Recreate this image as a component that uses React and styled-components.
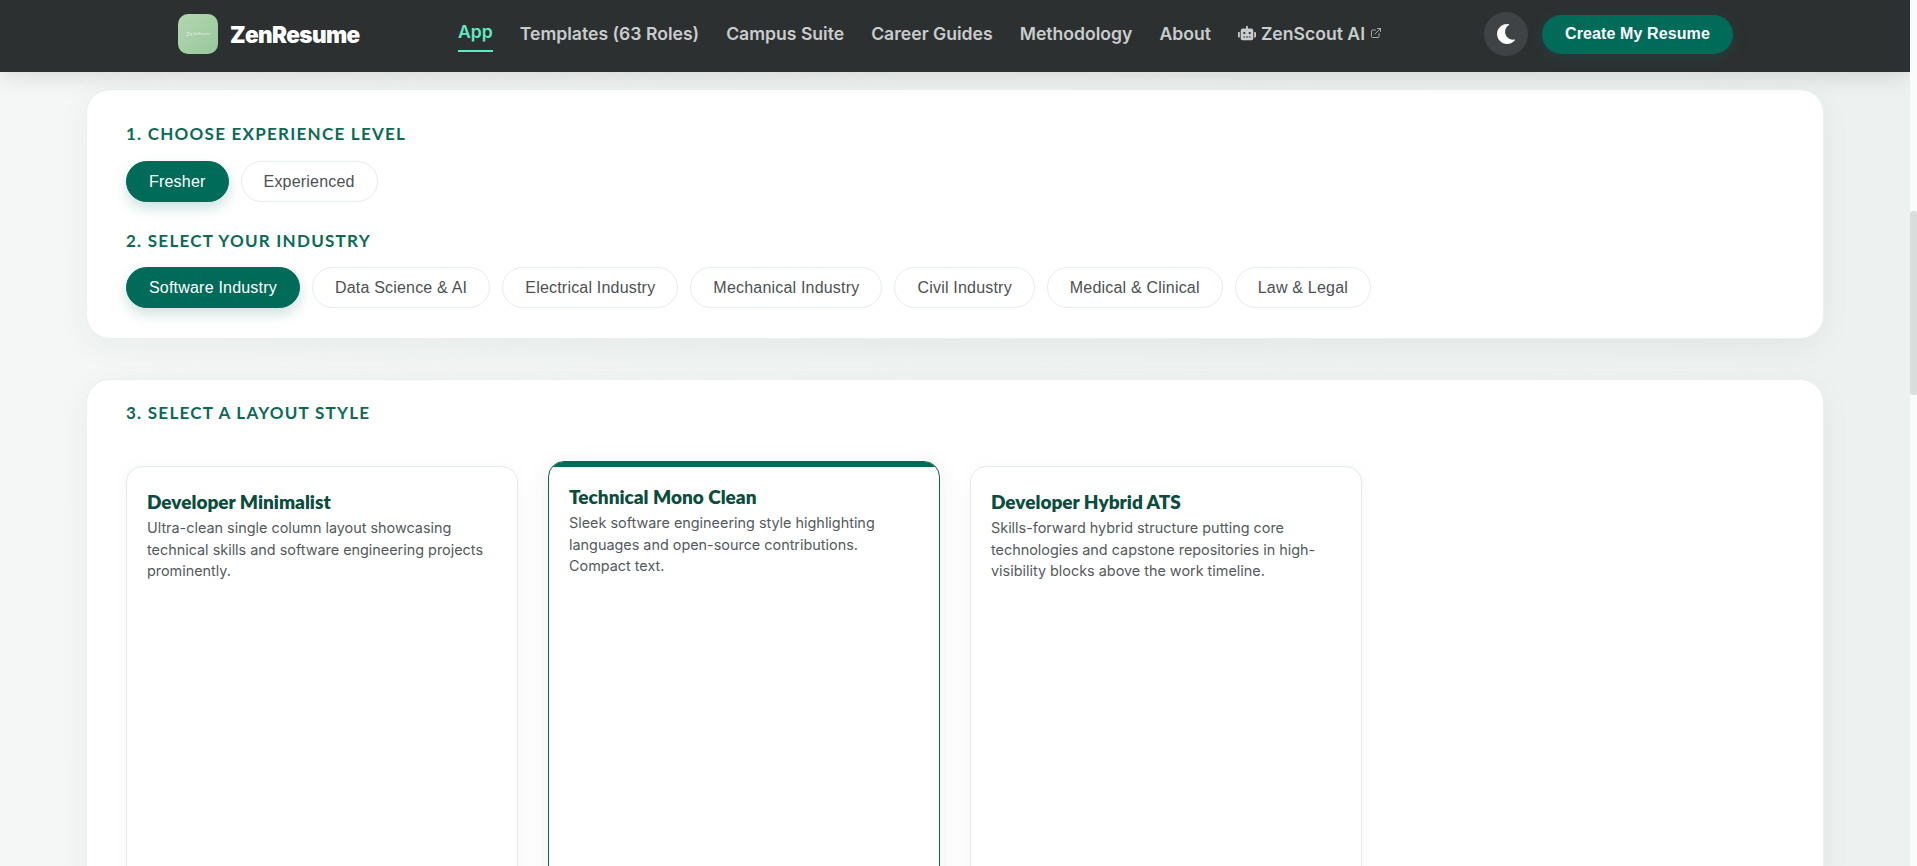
import React from 'react';
import styled, { createGlobalStyle } from 'styled-components';
import { FaMoon, FaRobot } from 'react-icons/fa';
import { ExternalLink } from 'lucide-react';

const GlobalStyle = createGlobalStyle`
  html, body {
    margin: 0;
    height: 100%;
    overflow: hidden;
  }
  * {
    box-sizing: border-box;
  }
`;

const Page = styled.div`
  display: flex;
  height: 100vh;
  overflow: hidden;
  background: #fafbfb;
`;

const Main = styled.div`
  width: 1910px;
  height: 100%;
  overflow: hidden;
  background: linear-gradient(90deg, #f4f7f6 0%, #eff3f2 50%, #edf1f0 100%);
`;

const ScrollTrack = styled.div`
  width: 7px;
  padding-top: 211px;
`;

const ScrollThumb = styled.div`
  height: 184px;
  background: #d9dedc;
  border-radius: 3px;
`;

const NavBar = styled.header`
  position: relative;
  z-index: 10;
  display: flex;
  align-items: center;
  height: 72px;
  padding: 0 177px 4px 178px;
  background: #2d3031;
  box-shadow: 0 4px 24px rgba(0, 0, 0, 0.12);
`;

const Brand = styled.div`
  display: flex;
  align-items: center;
  gap: 12px;
  width: 280px;
`;

const LogoBox = styled.div`
  display: flex;
  align-items: center;
  justify-content: center;
  gap: 1px;
  width: 40px;
  height: 40px;
  border-radius: 10px;
  background: linear-gradient(135deg, #b4d6ae 0%, #97c79d 100%);
  color: rgba(255, 255, 255, 0.75);
  font-family: 'Inter', sans-serif;
  font-size: 3px;
  white-space: nowrap;
`;

const LogoMark = styled.span`
  font-size: 5px;
  font-style: italic;
`;

const BrandName = styled.span`
  font-family: 'Inter', sans-serif;
  font-size: 22.5px;
  font-weight: 900;
  letter-spacing: -0.6px;
  color: #ffffff;
`;

const NavLinks = styled.nav`
  display: flex;
  align-items: center;
  gap: 27px;
  padding-top: 5px;
`;

const NavLink = styled.a`
  display: flex;
  align-items: center;
  gap: 5px;
  padding: 3px 0 8px;
  margin-top: ${(p) => (p.$active ? '-4px' : '0')};
  border-bottom: 2px solid ${(p) => (p.$active ? '#5eeac0' : 'transparent')};
  font-family: 'Inter', sans-serif;
  font-size: 17.6px;
  font-weight: 600;
  color: ${(p) => (p.$active ? '#5eeac0' : '#c9cccd')};
  white-space: nowrap;
`;

const NavActions = styled.div`
  display: flex;
  align-items: center;
  gap: 14px;
  margin-left: auto;
`;

const ThemeButton = styled.button`
  display: flex;
  align-items: center;
  justify-content: center;
  width: 44px;
  height: 44px;
  padding: 0;
  border: none;
  border-radius: 50%;
  background: #404345;
  color: #ffffff;
  font-size: 20px;
`;

const CreateButton = styled.button`
  width: 191px;
  height: 39px;
  padding: 0;
  border: none;
  border-radius: 20px;
  background: #006b58;
  box-shadow: 0 4px 14px rgba(0, 107, 88, 0.25);
  font-family: 'Liberation Sans', Arial, sans-serif;
  font-size: 16px;
  font-weight: 700;
  letter-spacing: 0.1px;
  color: #ffffff;
`;

const Content = styled.main`
  display: flex;
  flex-direction: column;
  gap: 40px;
  padding: 17px 86px 0;
`;

const Panel = styled.section`
  width: 1738px;
  padding: ${(p) => p.$padding};
  border: 1px solid #e8f1ee;
  border-radius: 24px;
  background: #ffffff;
  box-shadow: 0 8px 32px rgba(0, 60, 50, 0.05);
`;

const SectionTitle = styled.h3`
  margin: 0;
  font-family: 'Lato', sans-serif;
  font-size: 17px;
  font-weight: 700;
  line-height: 22px;
  letter-spacing: 1.25px;
  color: #0a6b55;
`;

const PillRow = styled.div`
  display: flex;
  gap: 12px;
  margin: ${(p) => p.$margin};
`;

const Pill = styled.button`
  height: 41px;
  padding: 0 22px;
  border: 1px solid ${(p) => (p.$active ? '#006b58' : '#e6ecea')};
  border-radius: 21px;
  background: ${(p) => (p.$active ? '#006b58' : '#ffffff')};
  box-shadow: ${(p) => (p.$active ? '0 6px 14px rgba(0, 107, 88, 0.2)' : 'none')};
  font-family: 'Liberation Sans', Arial, sans-serif;
  font-size: 16px;
  letter-spacing: 0.2px;
  color: ${(p) => (p.$active ? '#ffffff' : '#4d5152')};
  white-space: nowrap;
`;

const TemplateGrid = styled.div`
  display: flex;
  align-items: flex-start;
  gap: 30px;
  margin-top: 42px;
`;

const TemplateCard = styled.article`
  position: relative;
  width: 392px;
  height: 900px;
  padding: 23px 20px 0;
  overflow: hidden;
  border: 1px solid ${(p) => (p.$selected ? '#17604f' : '#e3ebe8')};
  border-radius: 16px;
  background: #ffffff;
  box-shadow: 0 4px 24px rgba(0, 60, 50, ${(p) => (p.$selected ? '0.08' : '0.04')});
  transform: ${(p) => (p.$selected ? 'translateY(-5px)' : 'none')};
`;

const SelectedBar = styled.span`
  position: absolute;
  top: 0;
  left: 0;
  right: 0;
  height: 5px;
  background: #006b58;
`;

const CardTitle = styled.h4`
  margin: 0 0 4px;
  font-family: 'Lato', sans-serif;
  font-size: 19px;
  font-weight: 800;
  line-height: 23px;
  color: #0b4d3d;
`;

const CardText = styled.p`
  margin: 0;
  font-family: 'Inter', sans-serif;
  font-size: 14.4px;
  line-height: 21.6px;
  color: #555a5c;
`;

const links = ['Templates (63 Roles)', 'Campus Suite', 'Career Guides', 'Methodology', 'About'];

const industries = [
  'Software Industry',
  'Data Science & AI',
  'Electrical Industry',
  'Mechanical Industry',
  'Civil Industry',
  'Medical & Clinical',
  'Law & Legal',
];

const templates = [
  {
    name: 'Developer Minimalist',
    text: 'Ultra-clean single column layout showcasing technical skills and software engineering projects prominently.',
  },
  {
    name: 'Technical Mono Clean',
    text: 'Sleek software engineering style highlighting languages and open-source contributions. Compact text.',
    selected: true,
  },
  {
    name: 'Developer Hybrid ATS',
    text: 'Skills-forward hybrid structure putting core technologies and capstone repositories in high-visibility blocks above the work timeline.',
  },
];

const App = () => {
  return (
    <Page>
      <GlobalStyle />
      <Main>
        <NavBar>
          <Brand>
            <LogoBox>
              <LogoMark>Zn</LogoMark>
              <span>ZenResume</span>
            </LogoBox>
            <BrandName>ZenResume</BrandName>
          </Brand>
          <NavLinks>
            <NavLink $active>App</NavLink>
            {links.map((link) => (
              <NavLink key={link}>{link}</NavLink>
            ))}
            <NavLink>
              <FaRobot size={18} />
              ZenScout AI
              <ExternalLink size={12} strokeWidth={1.5} />
            </NavLink>
          </NavLinks>
          <NavActions>
            <ThemeButton aria-label="Toggle theme">
              <FaMoon />
            </ThemeButton>
            <CreateButton>Create My Resume</CreateButton>
          </NavActions>
        </NavBar>
        <Content>
          <Panel $padding="33px 39px 30px">
            <SectionTitle>1. CHOOSE EXPERIENCE LEVEL</SectionTitle>
            <PillRow $margin="16px 0 28px">
              <Pill $active>Fresher</Pill>
              <Pill>Experienced</Pill>
            </PillRow>
            <SectionTitle>2. SELECT YOUR INDUSTRY</SectionTitle>
            <PillRow $margin="15px 0 0">
              {industries.map((item, i) => (
                <Pill key={item} $active={i === 0}>{item}</Pill>
              ))}
            </PillRow>
          </Panel>
          <Panel $padding="22px 39px 0">
            <SectionTitle>3. SELECT A LAYOUT STYLE</SectionTitle>
            <TemplateGrid>
              {templates.map((t) => (
                <TemplateCard key={t.name} $selected={t.selected}>
                  {t.selected && <SelectedBar />}
                  <CardTitle>{t.name}</CardTitle>
                  <CardText>{t.text}</CardText>
                </TemplateCard>
              ))}
            </TemplateGrid>
          </Panel>
        </Content>
      </Main>
      <ScrollTrack>
        <ScrollThumb />
      </ScrollTrack>
    </Page>
  );
};

export default App;
